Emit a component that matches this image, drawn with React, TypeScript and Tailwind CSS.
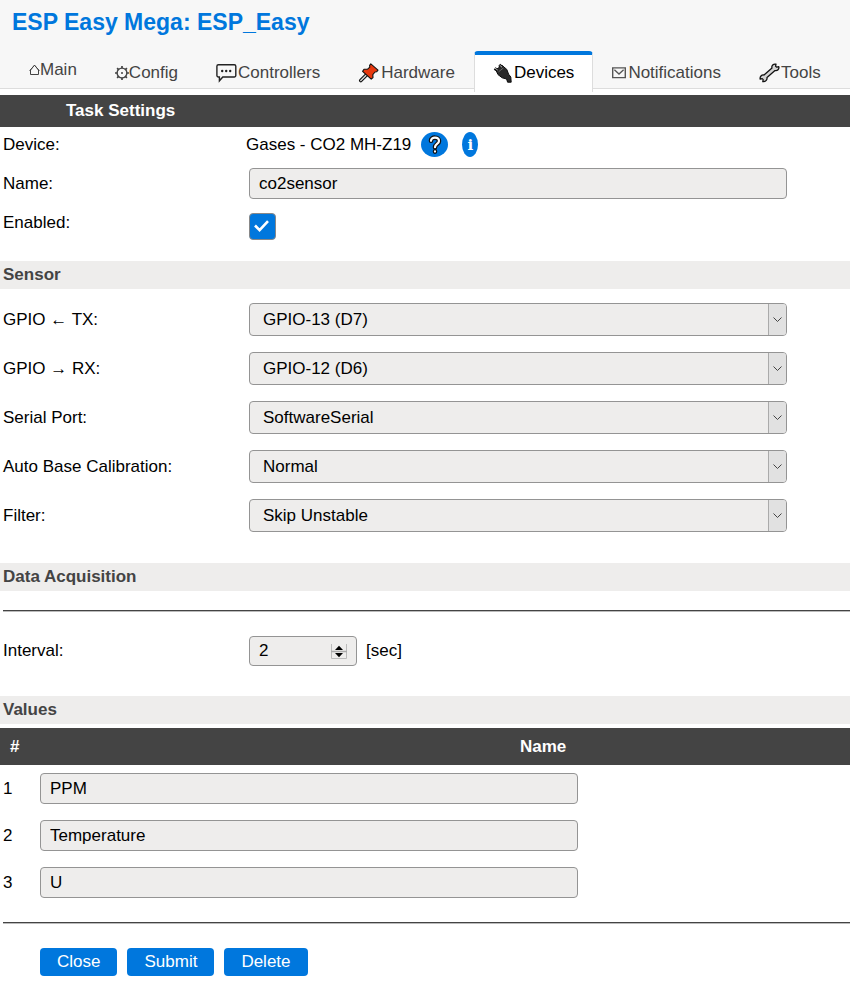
import { useState } from "react";
import type { ReactNode } from "react";
import clsx from "clsx";

const fieldStyle =
  "rounded border border-[#949494] bg-[#eeedec] px-[9px] text-[17px] text-black outline-none";

const HomeIcon = () => (
  <svg className="h-4 w-[11px] shrink-0" viewBox="0 0 11 16" fill="none" stroke="#444" aria-hidden="true">
    <path d="M1.5 12.5V8L5.5 3.2 9.5 8v4.5z" />
    <path d="M.6 8.8 5.5 3.2l4.9 5.6" />
  </svg>
);

const GearIcon = () => (
  <svg className="h-4 w-[14px] shrink-0" viewBox="0 0 14 16" fill="none" stroke="#444" aria-hidden="true">
    <circle cx="7" cy="8" r="4.9" strokeWidth="1.4" />
    <circle cx="7" cy="8" r="1" fill="#444" stroke="none" />
    <path
      d="M7 3.3V1M7 12.7V15M2.3 8H0M11.7 8H14M3.6 4.6 2.1 3.1M10.4 4.6l1.5-1.5M3.6 11.4l-1.5 1.5M10.4 11.4l1.5 1.5"
      strokeWidth="1.7"
    />
  </svg>
);

const ChatIcon = () => (
  <svg className="h-5 w-[22px] shrink-0" viewBox="0 0 22 20" fill="none" stroke="#222" aria-hidden="true">
    <path
      d="M2.4 1.8h15.9a1.5 1.5 0 0 1 1.5 1.5v9.2a1.5 1.5 0 0 1-1.5 1.5H6.8L3.4 17.8V14h-1a1.5 1.5 0 0 1-1.5-1.5V3.3a1.5 1.5 0 0 1 1.5-1.5z"
      strokeWidth="1.4"
    />
    <g fill="#222" stroke="none">
      <circle cx="6.2" cy="8" r="1.2" />
      <circle cx="10.2" cy="8" r="1.2" />
      <circle cx="14.2" cy="8" r="1.2" />
    </g>
  </svg>
);

const PinIcon = () => (
  <svg className="h-5 w-[23px] shrink-0" viewBox="0 0 23 20" strokeLinejoin="round" aria-hidden="true">
    <path d="M8.6 11.8 2.8 17.6" stroke="#111" strokeWidth="3.6" strokeLinecap="round" />
    <path d="M8.6 11.8 2.8 17.6" stroke="#ddd" strokeWidth="1.4" strokeLinecap="round" />
    <path
      d="M12.8.9 20 7.2 18.6 8.8 17 9 14.8 11.6 15 14.6 13.2 16.2 4.6 8.4 6 6.2 9.6 6.2 11.8 4.2 11.6 2.4z"
      fill="#e8380d"
      stroke="#111"
      strokeWidth="1.1"
    />
  </svg>
);

const PlugIcon = () => (
  <svg className="h-5 w-[21px] shrink-0" viewBox="0 0 21 20" aria-hidden="true">
    <path d="M1.6 5.4 5.6 8M6.2 1.8 10 5" stroke="#111" strokeWidth="3" />
    <path
      d="M2.8 6.8 9 2.4 13.8 6.4 15.6 11.2 17.8 14 18.2 19.2H14.6L13.6 16 9.2 14.8 5 11.6z"
      fill="#2a2a2a"
      stroke="#0c0c0c"
      strokeLinejoin="round"
    />
    <path d="M2 5.2 4.6 7M6.6 2.2 9 4.2" stroke="#ccc" strokeWidth=".9" />
    <path d="M5.6 8.8 10.4 5" stroke="#777" strokeWidth=".8" />
  </svg>
);

const MailIcon = () => (
  <svg className="h-4 w-4 shrink-0" viewBox="0 0 16 16" fill="none" stroke="#555" aria-hidden="true">
    <path d="M.7 2.9h12.6v9.7H.7z" strokeWidth="1.4" />
    <path d="M2.4 4.8 7 9l4.6-4.2" strokeWidth="1.3" />
  </svg>
);

const WrenchIcon = () => (
  <svg className="h-5 w-[22px] shrink-0" viewBox="0 0 22 20" aria-hidden="true">
    <path
      d="M13 5C12.2 2.6 14.4.6 17 1.2L16.6 3.2 17.8 4.2 19.8 3.6C20.4 6.2 18.4 8.2 16 7.6L8 14.6C8.4 17 6.4 19 3.8 18.6L4.2 16.6 3.2 15.6 1.2 16.2C.6 13.6 2.6 11.6 5 12z"
      fill="#d4d4d4"
      stroke="#111"
      strokeWidth="1.3"
      strokeLinejoin="round"
    />
  </svg>
);

const TABS = [
  { label: "Main", icon: <HomeIcon /> },
  { label: "Config", icon: <GearIcon /> },
  { label: "Controllers", icon: <ChatIcon /> },
  { label: "Hardware", icon: <PinIcon /> },
  { label: "Devices", icon: <PlugIcon /> },
  { label: "Notifications", icon: <MailIcon /> },
  { label: "Tools", icon: <WrenchIcon /> },
];

const SELECTS = [
  { id: "tx", label: "GPIO ← TX:", options: ["GPIO-13 (D7)", "GPIO-12 (D6)"] },
  { id: "rx", label: "GPIO → RX:", options: ["GPIO-12 (D6)", "GPIO-13 (D7)"] },
  { id: "serial", label: "Serial Port:", options: ["SoftwareSerial", "HW Serial0"] },
  { id: "abc", label: "Auto Base Calibration:", options: ["Normal", "ABC disabled"] },
  { id: "filter", label: "Filter:", options: ["Skip Unstable", "Use Unstable"] },
];

const VALUES = ["PPM", "Temperature", "U"];

const SectionTitle = ({ children }: { children: ReactNode }) => (
  <h2 className="bg-[#eeedec] pl-[3px] text-[17px] leading-7 font-bold text-[#444]">{children}</h2>
);

const Row = ({ id, label, children }: { id: string; label: string; children: ReactNode }) => (
  <div className="flex items-center">
    <label htmlFor={id} className="w-[249px] shrink-0 pl-[3px]">
      {label}
    </label>
    {children}
  </div>
);

const SelectField = ({ id, options }: { id: string; options: string[] }) => (
  <div className="relative w-full max-w-[538px]">
    <select id={id} className={clsx(fieldStyle, "block h-[33px] w-full appearance-none pl-[13px]")}>
      {options.map((option) => (
        <option key={option}>{option}</option>
      ))}
    </select>
    <span className="pointer-events-none absolute inset-y-px right-px flex w-[18px] items-center justify-center rounded-r-[3px] border-l border-[#aaa] bg-[#e1e1e1]">
      <svg className="h-[5px] w-[9px]" viewBox="0 0 9 5" fill="none" stroke="#444" aria-hidden="true">
        <path d="m.5.5 4 4 4-4" />
      </svg>
    </span>
  </div>
);

const App = () => {
  const [enabled, setEnabled] = useState(true);

  return (
    <div className="min-h-screen overflow-x-hidden bg-white font-['Liberation_Sans',Arial,sans-serif] text-[17px] leading-6 text-black">
      <header className="border-b border-[#ddd] bg-[#f7f7f7] pt-2">
        <h1 className="pl-3 text-[23px] leading-7 font-bold text-[#0077dd]">
          ESP Easy Mega: ESP_Easy
        </h1>
        <nav className="mt-[15px] -mb-1 flex pl-[10px]">
          {TABS.map(({ label, icon }) => (
            <a
              key={label}
              href="#"
              className={clsx(
                "flex h-[41px] items-center rounded-t border-x border-t-4 px-[18px]",
                label === "Devices"
                  ? "border-x-[#ddd] border-t-[#0077dd] bg-white text-black"
                  : "border-transparent text-[#444]",
                label === "Main" ? "pb-2" : "pb-0.5",
              )}
            >
              {icon}
              {label}
            </a>
          ))}
        </nav>
      </header>

      <form onSubmit={(e) => e.preventDefault()}>
        <h2 className="mt-[6px] bg-[#444] pl-[66px] text-[17px] leading-8 font-bold text-white">
          Task Settings
        </h2>
        <div className="flex items-center pt-[5px]">
          <span className="w-[246px] shrink-0 pl-[3px]">Device:</span>
          <span>Gases - CO2 MH-Z19</span>
          <a
            href="#"
            aria-label="Help"
            className="ml-[10px] flex h-[25px] w-[27px] items-center justify-center rounded-[50%] bg-[#0077dd]"
          >
            <svg className="h-5 w-[14px]" viewBox="0 0 14 20" fill="none" strokeLinecap="round" aria-hidden="true">
              <path d="M3 5.8C3 1.6 11 1.6 11 6c0 3-4 3-4 6.2M7 16.4v.2" stroke="#111" strokeWidth="4.6" />
              <path d="M3 5.8C3 1.6 11 1.6 11 6c0 3-4 3-4 6.2M7 16.4v.2" stroke="#fff" strokeWidth="2.2" />
            </svg>
          </a>
          <a
            href="#"
            className="ml-[14px] flex h-[25px] w-4 items-center justify-center rounded-[50%] bg-[#0077dd] font-['DejaVu_Serif',serif] text-[15px] font-bold text-white"
          >
            i
          </a>
        </div>
        <div className="pt-[11px]">
          <Row id="name" label="Name:">
            <input id="name" type="text" defaultValue="co2sensor" className={clsx(fieldStyle, "h-[31px] w-full max-w-[538px]")} />
          </Row>
        </div>
        <div className="flex pt-[14px] pb-[21px]">
          <label htmlFor="enabled" className="w-[249px] shrink-0 pl-[3px] leading-5">
            Enabled:
          </label>
          <span className="relative">
            <input
              id="enabled"
              type="checkbox"
              checked={enabled}
              onChange={(e) => setEnabled(e.target.checked)}
              className="block size-[27px] appearance-none rounded border border-[#888] bg-[#eeedec] checked:bg-[#0077dd]"
            />
            {enabled && (
              <svg
                className="pointer-events-none absolute inset-0 size-[27px]"
                viewBox="0 0 27 27"
                fill="none"
                stroke="#fff"
                strokeWidth="2.6"
                aria-hidden="true"
              >
                <path d="m6 12.5 4.6 4.7 8.4-9" />
              </svg>
            )}
          </span>
        </div>

        <SectionTitle>Sensor</SectionTitle>
        <div className="flex flex-col gap-4 pt-[14px] pb-[31px]">
          {SELECTS.map(({ id, label, options }) => (
            <Row key={id} id={id} label={label}>
              <SelectField id={id} options={options} />
            </Row>
          ))}
        </div>

        <SectionTitle>Data Acquisition</SectionTitle>
        <hr className="mt-[19px] ml-[3px] border-t border-b border-t-[#444] border-b-[#bbb]" />
        <div className="pt-6 pb-[30px]">
          <Row id="interval" label="Interval:">
            <div className="relative">
              <input
                id="interval"
                type="number"
                defaultValue={2}
                className={clsx(
                  fieldStyle,
                  "block h-[30px] w-[108px] [appearance:textfield] [&::-webkit-inner-spin-button]:appearance-none",
                )}
              />
              <svg className="pointer-events-none absolute top-2 right-[10px] h-[15px] w-4" viewBox="0 0 16 15" aria-hidden="true">
                <path d="M.5 0v14.5h15V0" fill="none" stroke="#bbb" />
                <path d="M0 7.5h16" stroke="#aaa" strokeWidth="1.5" />
                <path d="M4 6 8 1.8 12 6zM4 9l4 4.2L12 9z" fill="#000" />
              </svg>
            </div>
            <span className="pl-[9px]">[sec]</span>
          </Row>
        </div>

        <SectionTitle>Values</SectionTitle>
        <table className="mt-1 w-full border-collapse">
          <thead>
            <tr className="h-[37px] bg-[#444] text-left text-white">
              <th className="w-10 pl-[10px]">#</th>
              <th className="pl-[480px]">Name</th>
            </tr>
          </thead>
          <tbody>
            {VALUES.map((value, i) => (
              <tr key={value} className="h-[47px]">
                <td className="pl-[3px]">{i + 1}</td>
                <td>
                  <input
                    type="text"
                    aria-label={`Value ${i + 1} name`}
                    defaultValue={value}
                    className={clsx(fieldStyle, "block h-[31px] w-full max-w-[538px]")}
                  />
                </td>
              </tr>
            ))}
          </tbody>
        </table>
        <hr className="mt-4 ml-[3px] border-t border-b border-t-[#444] border-b-[#bbb]" />
        <div className="flex gap-[10px] pt-6 pb-3 pl-10">
          {["Close", "Submit", "Delete"].map((action) => (
            <button key={action} type="button" className="h-7 rounded bg-[#0077dd] px-[17px] text-white">
              {action}
            </button>
          ))}
        </div>
      </form>
    </div>
  );
};

export default App;
